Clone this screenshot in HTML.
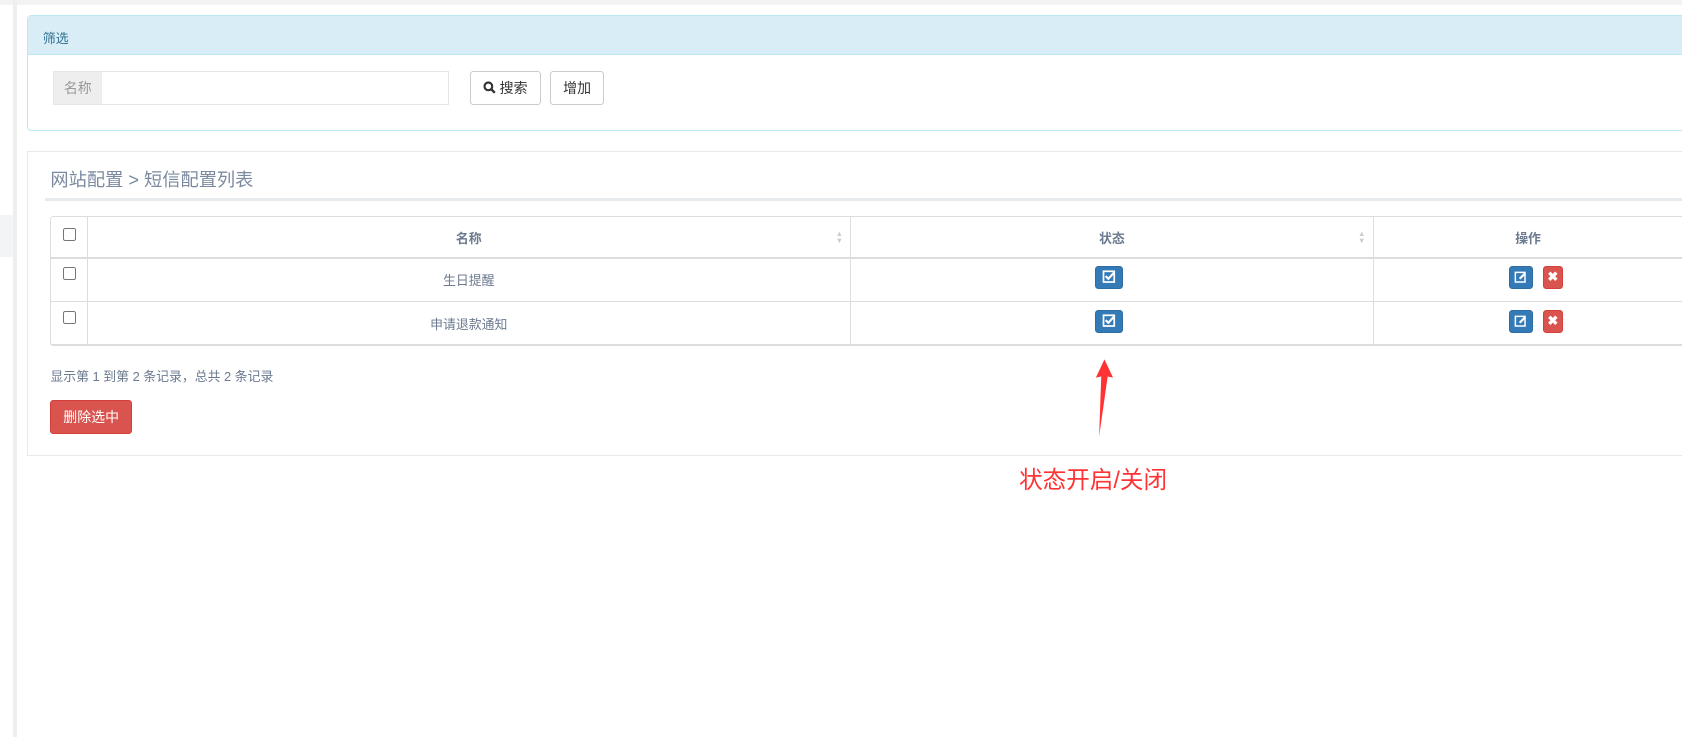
<!DOCTYPE html>
<html><head><meta charset="utf-8"><style>
*{margin:0;padding:0;box-sizing:border-box}
html,body{overflow:hidden}
body{width:1682px;height:737px;background:#fff;position:relative;overflow:hidden;font-family:"Liberation Sans","Noto Sans CJK SC",sans-serif;color:#6b7a8f;font-size:12px}
#w{position:absolute;left:0;top:0;width:1568px;height:687px;zoom:1.0727;overflow:hidden}
.a{position:absolute}
.cb{position:absolute;width:12px;height:12px;border:1px solid #767676;border-radius:2px;background:#fff}
.btnb{position:absolute;background:#337ab7;border:1px solid #2e6da4;border-radius:3px}
.btnr{position:absolute;background:#d9534f;border:1px solid #d43f3a;border-radius:3px;color:#fff;font-weight:bold;text-align:center}
.t{position:absolute;text-align:center}
</style></head><body><div id="w">
<div class="a" style="left:0;top:0;width:1568px;height:5px;background:#f3f3f4"></div>
<div class="a" style="left:0;top:200px;width:12px;height:40px;background:#f3f4f6"></div>
<div class="a" style="left:12px;top:0;width:4px;height:687px;background:#eeeeee"></div>

<div class="a" style="left:25px;top:14px;width:1560px;height:108px;border:1px solid #bce8f1;border-radius:4px;border-right:none"></div>
<div class="a" style="left:26px;top:15px;width:1560px;height:36px;background:#d9edf7;border-bottom:1px solid #bce8f1"></div>
<div class="a" style="left:40px;top:26px;color:#31708f;font-size:12px">筛选</div>
<div class="a" style="left:49px;top:66px;width:370px;height:32px;border:1px solid #e5e6e7"></div>
<div class="a" style="left:50px;top:67px;width:45px;height:30px;background:#eeeeee;color:#999;font-size:13px;line-height:30px;text-align:center">名称</div>
<div class="a" style="left:438px;top:66px;width:66px;height:32px;border:1px solid #ccc;border-radius:3px;color:#333;font-size:13px;line-height:30px;text-align:center">
<svg width="12" height="12" viewBox="0 0 12 12" style="vertical-align:-1px"><circle cx="5" cy="5" r="3.6" fill="none" stroke="#333" stroke-width="2"/><line x1="7.6" y1="7.6" x2="11" y2="11" stroke="#333" stroke-width="2.2"/></svg> 搜索</div>
<div class="a" style="left:513px;top:66px;width:50px;height:32px;border:1px solid #ccc;border-radius:3px;color:#333;font-size:13px;line-height:30px;text-align:center">增加</div>

<div class="a" style="left:25px;top:141px;width:1560px;height:284px;border:1px solid #e7eaec;border-right:none"></div>
<div class="a" style="left:47px;top:155px;font-size:17px;color:#7b8aa0">网站配置 &gt; 短信配置列表</div>
<div class="a" style="left:42px;top:185px;width:1540px;height:2px;background:#e7eaec"></div>

<div class="a" style="left:47px;top:201px;width:1540px;height:122px;border:1px solid #ddd;border-bottom:2px solid #ddd;border-radius:3px;border-right:none"></div>
<div class="a" style="left:48px;top:240px;width:1540px;height:1px;background:#ddd"></div>
<div class="a" style="left:48px;top:281px;width:1540px;height:1px;background:#ddd"></div>
<div class="a" style="left:81px;top:202px;width:1px;height:120px;background:#ddd"></div>
<div class="a" style="left:792px;top:202px;width:1px;height:120px;background:#ddd"></div>
<div class="a" style="left:1280px;top:202px;width:1px;height:120px;background:#ddd"></div>

<div class="cb" style="left:59px;top:213px"></div>
<div class="cb" style="left:59px;top:249px"></div>
<div class="cb" style="left:59px;top:290px"></div>

<div class="t" style="left:82px;width:710px;top:213px;font-weight:bold">名称</div>
<div class="t" style="left:793px;width:487px;top:213px;font-weight:bold">状态</div>
<div class="t" style="left:1281px;width:287px;top:213px;font-weight:bold">操作</div>
<div class="a" style="left:779px;top:214px;color:#ccc;font-size:7px;line-height:7px">▲<br>▼</div>
<div class="a" style="left:1266px;top:214px;color:#ccc;font-size:7px;line-height:7px">▲<br>▼</div>

<div class="t" style="left:82px;width:710px;top:252px">生日提醒</div>
<div class="t" style="left:82px;width:710px;top:293px">申请退款通知</div>

<div class="btnb" style="left:1021px;top:248px;width:26px;height:21px"><svg width="24" height="19" viewBox="0 0 24 19"><rect x="7" y="4" width="10" height="10" fill="none" stroke="#fff" stroke-width="1.6"/><path d="M9 8.5l2.5 2.5 5.5-6" fill="none" stroke="#fff" stroke-width="2"/></svg></div>
<div class="btnb" style="left:1021px;top:289px;width:26px;height:21px"><svg width="24" height="19" viewBox="0 0 24 19"><rect x="7" y="4" width="10" height="10" fill="none" stroke="#fff" stroke-width="1.6"/><path d="M9 8.5l2.5 2.5 5.5-6" fill="none" stroke="#fff" stroke-width="2"/></svg></div>

<div class="btnb" style="left:1407px;top:248px;width:22px;height:21px"><svg width="20" height="19" viewBox="0 0 20 19"><rect x="5" y="5" width="9" height="9" fill="none" stroke="#fff" stroke-width="1.4"/><path d="M9 11l5-5" stroke="#fff" stroke-width="2"/></svg></div>
<div class="btnr" style="left:1438px;top:248px;width:19px;height:21px;font-size:12px;line-height:19px">✖</div>
<div class="btnb" style="left:1407px;top:289px;width:22px;height:21px"><svg width="20" height="19" viewBox="0 0 20 19"><rect x="5" y="5" width="9" height="9" fill="none" stroke="#fff" stroke-width="1.4"/><path d="M9 11l5-5" stroke="#fff" stroke-width="2"/></svg></div>
<div class="btnr" style="left:1438px;top:289px;width:19px;height:21px;font-size:12px;line-height:19px">✖</div>

<div class="a" style="left:47px;top:341px;font-size:12px">显示第 1 到第 2 条记录，总共 2 条记录</div>
<div class="btnr" style="left:47px;top:373px;width:76px;height:32px;line-height:30px;font-size:13px;font-weight:normal">删除选中</div>

<svg class="a" style="left:1010px;top:330px" width="40" height="82" viewBox="0 0 40 82"><path d="M20 5 L28 22 L23 21 L15 77 L17 21 L12 22 Z" fill="#ff3333"/></svg>
<div class="a" style="left:950px;top:430px;font-size:22px;color:#ff3333">状态开启/关闭</div>
</div></body></html>
